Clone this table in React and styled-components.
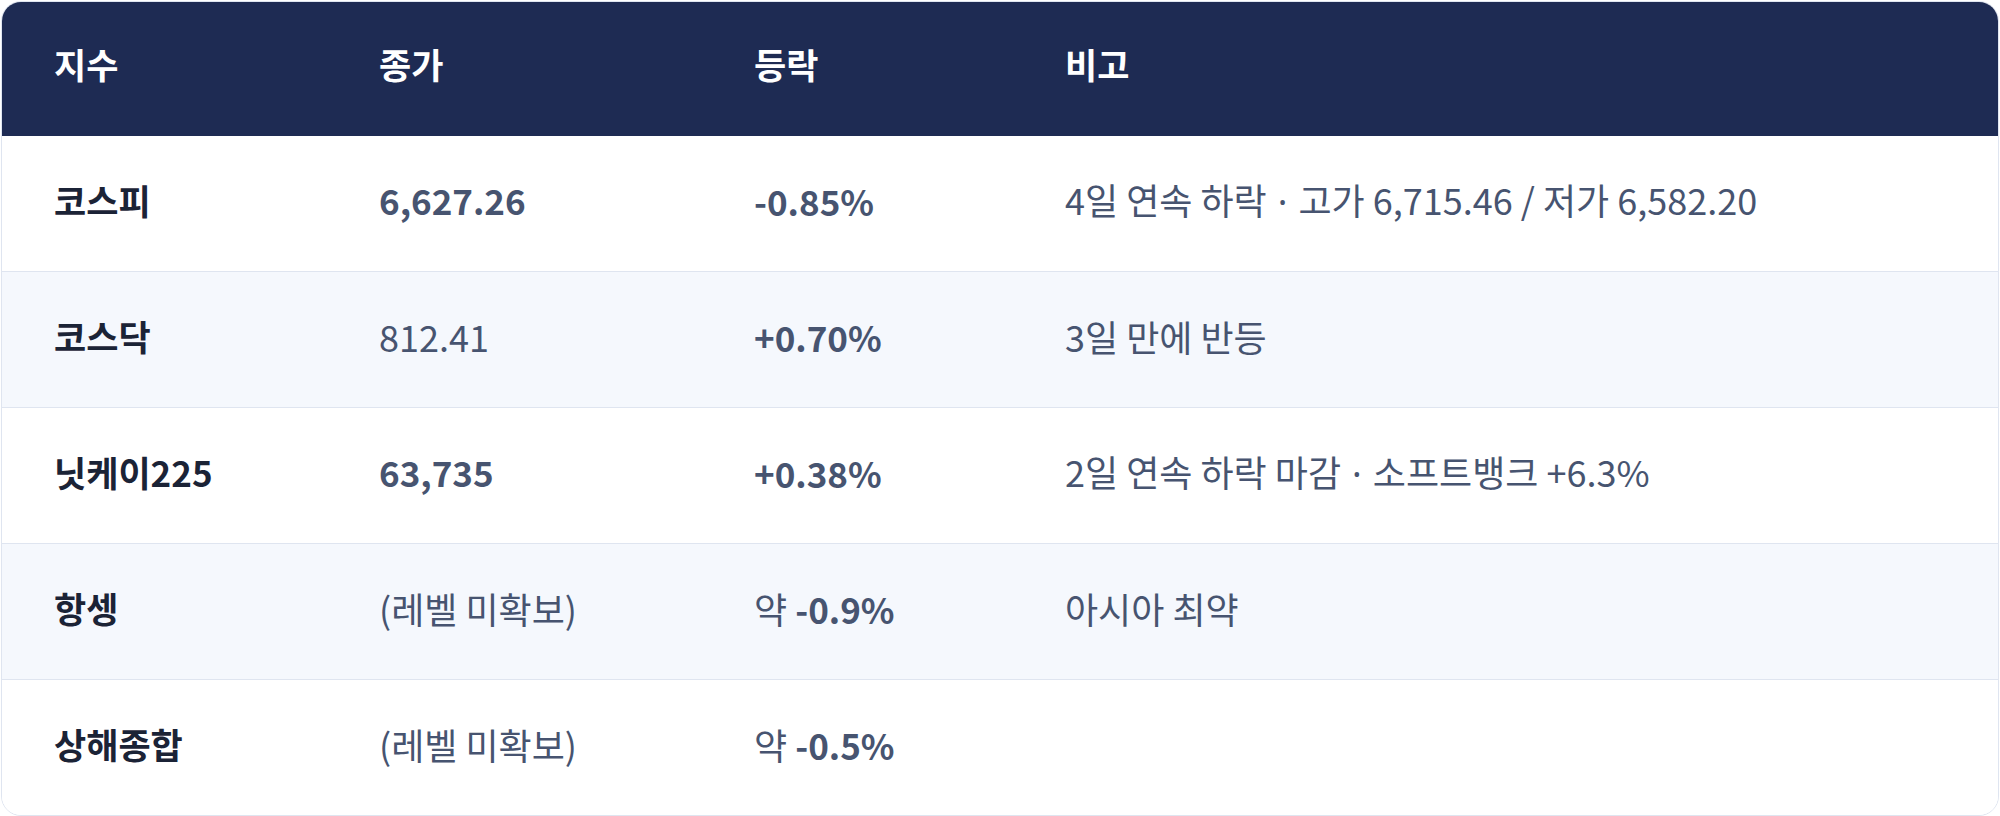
import styled, { createGlobalStyle } from "styled-components";

const GlobalStyle = createGlobalStyle`
  body {
    margin: 0;
    background: #ffffff;
    font-family: "Noto Sans CJK KR", "Noto Sans", sans-serif;
  }
`;

const COLS = "325px 375px 311px 1fr";

const Page = styled.div`
  padding: 1px;
`;

const Card = styled.div`
  border: 1px solid #dfe5f0;
  border-radius: 20px;
  overflow: hidden;
  background: #ffffff;
`;

const HeadRow = styled.div`
  display: grid;
  grid-template-columns: ${COLS};
  align-items: center;
  height: 131px;
  padding-bottom: 3px;
  background: #1e2b53;
`;

const HeadCell = styled.div`
  padding: 0 52px 8px;
  font-size: 35px;
  font-weight: 700;
  color: #ffffff;
`;

const Row = styled.div`
  display: grid;
  grid-template-columns: ${COLS};
  align-items: center;
  height: 135px;
  background: ${(p) => (p.$alt ? "#f5f8fd" : "#ffffff")};
  & + & {
    border-top: 1px solid #dfe5f0;
  }
`;

const Cell = styled.div`
  padding: 0 52px 8px;
  font-size: ${(p) => (p.$bold ? "35px" : "36px")};
  font-weight: ${(p) => (p.$bold ? 700 : 400)};
  color: ${(p) => (p.$dark ? "#1b2336" : "#475470")};
  white-space: nowrap;
`;

const Strong = styled.span`
  font-size: 35px;
  font-weight: 700;
`;

const Dot = styled.span`
  font-family: "Noto Sans", sans-serif;
  margin: 0 3px;
`;

const rows = [
  {
    name: "코스피",
    close: "6,627.26",
    closeBold: true,
    change: [null, "-0.85%"],
    note: "4일 연속 하락 · 고가 6,715.46 / 저가 6,582.20",
  },
  {
    name: "코스닥",
    close: "812.41",
    closeBold: false,
    change: [null, "+0.70%"],
    note: "3일 만에 반등",
  },
  {
    name: "닛케이225",
    close: "63,735",
    closeBold: true,
    change: [null, "+0.38%"],
    note: "2일 연속 하락 마감 · 소프트뱅크 +6.3%",
  },
  {
    name: "항셍",
    close: "(레벨 미확보)",
    closeBold: false,
    change: ["약 ", "-0.9%"],
    note: "아시아 최약",
  },
  {
    name: "상해종합",
    close: "(레벨 미확보)",
    closeBold: false,
    change: ["약 ", "-0.5%"],
    note: "",
  },
];

function Note({ text }) {
  const parts = text.split("·");
  return parts.map((part, i) => (
    <span key={i}>
      {i > 0 && <Dot>·</Dot>}
      {part}
    </span>
  ));
}

export default function App() {
  return (
    <Page>
      <GlobalStyle />
      <Card>
        <HeadRow>
          <HeadCell>지수</HeadCell>
          <HeadCell>종가</HeadCell>
          <HeadCell>등락</HeadCell>
          <HeadCell>비고</HeadCell>
        </HeadRow>
        {rows.map((r, i) => (
          <Row key={r.name} $alt={i % 2 === 1}>
            <Cell $bold $dark>
              {r.name}
            </Cell>
            <Cell $bold={r.closeBold}>{r.close}</Cell>
            <Cell>
              {r.change[0]}
              <Strong>{r.change[1]}</Strong>
            </Cell>
            <Cell>
              <Note text={r.note} />
            </Cell>
          </Row>
        ))}
      </Card>
    </Page>
  );
}
